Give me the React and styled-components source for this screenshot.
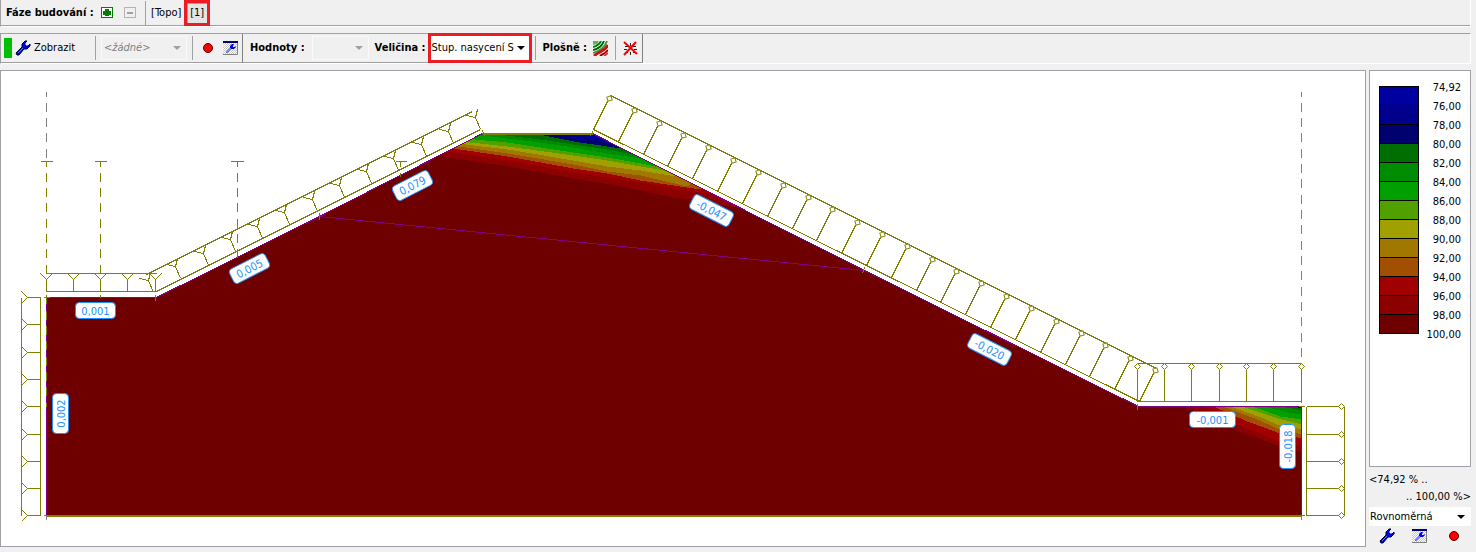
import styled, { createGlobalStyle } from 'styled-components';

const OLIVE = '#808000';
const PURPLE = '#800080';
const BLUE = '#1e90ff';

const scale = [
  { from: '74,92', color: '#0000a0' },
  { from: '76,00', color: '#00008c' },
  { from: '78,00', color: '#00006e' },
  { from: '80,00', color: '#006e00' },
  { from: '82,00', color: '#008c00' },
  { from: '84,00', color: '#00a000' },
  { from: '86,00', color: '#50a000' },
  { from: '88,00', color: '#a0a000' },
  { from: '90,00', color: '#a07800' },
  { from: '92,00', color: '#a05000' },
  { from: '94,00', color: '#a00000' },
  { from: '96,00', color: '#8c0000' },
  { from: '98,00', color: '#6e0000' },
];

// every band covers the area above its lower edge, the next one is drawn over it
const crestBands = [
  { color: '#8c0000', edge: '443,156 507,166 573,178 627,187 673,197 690,199 740,208' },
  { color: '#a00000', edge: '448,151 507,160 573,172 640,182 673,188 712,194' },
  { color: '#a05000', edge: '452,148 473,151 507,156 573,168 607,173 640,180 700,189' },
  { color: '#a07800', edge: '458,146 507,153 573,164 607,171 640,175 687,186' },
  { color: '#a0a000', edge: '465,144 507,149 573,160 607,166 640,170 675,176' },
  { color: '#50a000', edge: '470,142 507,146 573,155 607,160 640,166 664,170' },
  { color: '#00a000', edge: '475,139 507,142 573,152 607,157 640,163 655,166' },
  { color: '#008c00', edge: '482,135 507,138 540,142 573,147 607,153 640,158' },
  { color: '#006e00', edge: '497,134 540,139 573,144 607,149 632,154' },
  { color: '#00006e', edge: '533,133 573,141 607,146 620,148' },
  { color: '#00008c', edge: '543,133 573,138 597,141 608,143' },
];

const toeBands = [
  { color: '#8c0000', edge: '1183,406 1237,430 1280,446 1302,452' },
  { color: '#a00000', edge: '1203,406 1235,423 1277,440 1302,446' },
  { color: '#a05000', edge: '1213,406 1247,421 1277,432 1302,438' },
  { color: '#a07800', edge: '1222,406 1257,419 1277,428 1302,434' },
  { color: '#a0a000', edge: '1230,406 1263,418 1277,424 1302,429' },
  { color: '#50a000', edge: '1241,406 1277,418 1302,424' },
  { color: '#00a000', edge: '1252,406 1280,416 1302,419' },
  { color: '#008c00', edge: '1263,406 1287,412 1302,414' },
  { color: '#006e00', edge: '1280,406 1302,410' },
  { color: '#00006e', edge: '1292,406 1302,408' },
];

const tags = [
  { text: '0,001', x: 95, y: 310, w: 40 },
  { text: '0,005', x: 249, y: 268, w: 40, angle: -27 },
  { text: '0,079', x: 412, y: 185, w: 40, angle: -27 },
  { text: '-0,047', x: 711, y: 210, w: 44, angle: 27 },
  { text: '-0,020', x: 989, y: 349, w: 44, angle: 27 },
  { text: '-0,001', x: 1212, y: 419, w: 46 },
  { text: '0,002', x: 60, y: 413, w: 40, angle: -90 },
  { text: '-0,018', x: 1287, y: 446, w: 44, angle: -90 },
];

const GROUND = '46,297 156,297 319,216 482,133 592,133 864,270 1138,406 1301,406 1301,515 46,515';

const steps = (count, from, to) =>
  Array.from({ length: count + 1 }, (_, i) => Math.round(from + ((to - from) * i) / count));

const zip = (xs, ys) => xs.map((x, i) => [x, ys[i]]);

const Wrench = () => (
  <svg width='16' height='16' viewBox='0 0 16 16' aria-hidden='true'>
    <path
      d='M1 13l6-6V4l3-3h2L10 3v2l1 1h2l2-2v2l-3 3H9l-5 6H2z'
      fill='#0000ff'
      stroke='#000040'
      strokeWidth='1'
      strokeLinejoin='round'
    />
    <path d='M3 13l5-5' stroke='#4a7dff' strokeWidth='1' />
  </svg>
);

const WindowWrench = () => (
  <svg width='16' height='14' viewBox='0 0 16 14' aria-hidden='true'>
    <defs>
      <pattern id='dots' width='2' height='2' patternUnits='userSpaceOnUse'>
        <rect width='2' height='2' fill='#fff' />
        <rect width='1' height='1' fill='#c8c8c8' />
        <rect x='1' y='1' width='1' height='1' fill='#c8c8c8' />
      </pattern>
    </defs>
    <rect width='15' height='14' fill='url(#dots)' />
    <path d='M0 13.500h14.500V2' fill='none' stroke='#808080' />
    <rect width='15' height='2' fill='#000080' />
    <path d='M3 11l4-4V5l2-2h2L10 5v1h2l1-1v1l-2 2H8l-4 4z' fill='#0000ff' />
    <path d='M4 11l4-4' stroke='#5a8cff' />
  </svg>
);

const RedDot = () => (
  <svg width='12' height='12' viewBox='0 0 12 12' aria-hidden='true'>
    <circle cx='6' cy='6' r='4.500' fill='#ff0000' stroke='#600000' />
  </svg>
);

const PlusIcon = () => (
  <svg width='13' height='12' viewBox='0 0 13 12' shapeRendering='crispEdges' aria-hidden='true'>
    <rect width='12' height='11' rx='1' fill='#008000' />
    <rect x='1' y='1' width='10' height='9' fill='#fff' />
    <path d='M4 2h4v2h2v4H8v1H4V8H2V4h2z' fill='#008000' />
  </svg>
);

const MinusIcon = () => (
  <svg width='13' height='12' viewBox='0 0 13 12' shapeRendering='crispEdges' aria-hidden='true'>
    <rect width='12' height='11' rx='1' fill='#b4b4b4' />
    <rect x='1' y='1' width='10' height='9' fill='#f0f0f0' />
    <rect x='3' y='5' width='6' height='2' fill='#a0a0a0' />
  </svg>
);

const SurfaceIcon = () => (
  <svg width='15' height='15' viewBox='0 0 15 15' aria-hidden='true'>
    <rect width='15' height='15' fill='#fff' />
    <path d='M0 0h6L4 3 0 4z' fill='#60b060' />
    <g fill='none' strokeWidth='2'>
      <path d='M0 6C4 5 6 4 8 0' stroke='#008000' />
      <path d='M0 9C6 8 9 5 11 0' stroke='#006000' />
      <path d='M0 12C7 10 12 6 14 0' stroke='#30a040' />
      <path d='M1 15C5 11 11 11 15 4' stroke='#d01010' strokeWidth='3' />
      <path d='M7 15C10 13 13 12 15 9' stroke='#a00000' />
      <path d='M11 15L15 12' stroke='#e03030' />
    </g>
  </svg>
);

const NoMeshIcon = () => (
  <svg width='15' height='15' viewBox='0 0 15 15' aria-hidden='true'>
    <g shapeRendering='crispEdges' stroke='#202020' fill='none'>
      <path d='M2 5h3M10 5h3M1 8h3M11 8h3M2 11h3M10 11h3' />
      <path d='M5 4v2M10 4v2M7 2v3M7 11v3M4 10v2M11 10v2' />
    </g>
    <path d='M1 1l13 12M13 1L1 14' stroke='#ff0000' strokeWidth='2' />
  </svg>
);

const Diamond = ({ x, y, angle = 0 }) => (
  <path
    d='M-3 0L0-3L3 0L0 3Z'
    fill='#fff'
    transform={`translate(${x} ${y}) rotate(${angle})`}
    shapeRendering='geometricPrecision'
  />
);

const Loads = () => {
  const leftYs = [297, 324, 352, 379, 406, 434, 461, 488, 515];
  const topXs = [46, 73, 100, 127, 155];
  const toeXs = [1137, 1164, 1191, 1219, 1246, 1273, 1301];
  const rightYs = [406, 434, 461, 488, 515];
  const upSlope = zip(steps(12, 153, 480), steps(12, 292, 129));
  const downSlope = zip(steps(22, 593, 1139), steps(22, 129, 401));

  return (
    <g stroke={OLIVE} fill='none'>
      <path d='M21 297V515M40 297V515M43 297H49M43 515H49' />
      {leftYs.map((y) => (
        <path key={y} d={`M40 ${y}H27L21 ${y - 6}M27 ${y}L21 ${y + 6}`} />
      ))}

      <path d='M46 273H156M46 291H156' />
      {topXs.map((x) => (
        <path key={x} d={`M${x} 291V279L${x - 6} 273M${x} 279L${x + 6} 273`} />
      ))}

      <path d='M156 291L480 129M146 274L472 111M155 294V300M482 130L484 136' />
      {upSlope.map(([x, y]) => (
        <path key={x} d={`M${x} ${y}L${x - 5} ${y - 12}L${x - 14} ${y - 14}M${x - 5} ${y - 12}L${x - 3} ${y - 20}`} />
      ))}

      <path d='M593 129L1139 401M610 95L1156 368M592 131L590 136M1137 403V409M864 267L862 273' />
      {downSlope.map(([x, y]) => (
        <g key={x}>
          <path d={`M${x} ${y}L${x + 14} ${y - 28}`} />
          <Diamond x={x + 16} y={y - 31} angle={27} />
        </g>
      ))}

      <path d='M1137 363H1301M1137 401H1301' />
      {toeXs.map((x) => (
        <g key={x}>
          <path d={`M${x} 401V369`} />
          <Diamond x={x} y={366} />
        </g>
      ))}

      <path d='M1306 406V515M1344 406V515M1298 406H1304M1298 515H1304' />
      {rightYs.map((y) => (
        <g key={y}>
          <path d={`M1306 ${y}H1338`} />
          <Diamond x={1341} y={y} />
        </g>
      ))}
    </g>
  );
};

const Section = () => (
  <Drawing viewBox='0.5 70.5 1364 475' role='img' aria-label='Stup. nasycení S'>
    <defs>
      <clipPath id='ground'>
        <polygon points={GROUND} />
      </clipPath>
    </defs>
    <g shapeRendering='crispEdges' strokeWidth='1'>
      <path d='M46 91V161M1301 91V406' stroke='#808080' strokeDasharray='9 6.330' strokeDashoffset='4' />
      <path d='M46 515V519M1301 515V519' stroke='#808080' />
      <polygon points={GROUND} fill='#6e0000' />
      <g clipPath='url(#ground)'>
        {crestBands.map(({ color, edge }) => (
          <polygon key={color} fill={color} points={`420,120 ${edge} 760,120`} />
        ))}
        <polygon fill='#0000a0' points='560,133 592,137 600,137 600,133' />
        {toeBands.map(({ color, edge }) => (
          <polygon key={color} fill={color} points={`${edge} 1302,400`} />
        ))}
      </g>
      <g stroke={PURPLE} fill='none'>
        <path d='M46 515V297H156L319 216L482 133M592 133L864 270L1138 406H1301V515' />
        <path d='M319 216L864 270' />
      </g>
      <g stroke={OLIVE} fill='none'>
        <path d='M482 133H592M46 515H1301' strokeWidth='2' />
        <path d='M40 161H52M94 161H106M230 161H243M395 161H406' />
        <path
          d='M46 161V406M100 161V297M237 161V257M400 161V176'
          strokeDasharray='9 6.330'
          strokeDashoffset='4'
        />
        <path d='M319 212V219' />
      </g>
      <Loads />
    </g>
    {tags.map(({ text, x, y, w, angle = 0 }) => (
      <g key={text} transform={`translate(${x} ${y}) rotate(${angle})`}>
        <rect x={-w / 2} y='-8' width={w} height='16' rx='4' fill='#fff' stroke={BLUE} />
        <Tag y='4'>{text}</Tag>
      </g>
    ))}
  </Drawing>
);

const App = () => {
  return (
    <Page>
      <GlobalStyle />
      <Bar>
        <StageBar>
          <BarTitle>Fáze budování :</BarTitle>
          <IconButton aria-label='Přidat fázi'>
            <PlusIcon />
          </IconButton>
          <IconButton aria-label='Odebrat fázi' disabled>
            <MinusIcon />
          </IconButton>
          <Divider />
          <StageButton>[Topo]</StageButton>
          <StageButton $active>[1]</StageButton>
        </StageBar>
      </Bar>

      <Bar $sunken>
        <Group>
          <ShowButton>
            <i />
            <Wrench />
            Zobrazit
          </ShowButton>
          <Divider />
          <Combo $width='86px' $muted>
            <select aria-label='Nastavení zobrazení' disabled>
              <option>&lt;žádné&gt;</option>
            </select>
          </Combo>
          <Divider />
          <IconButton aria-label='Zaznamenat'>
            <RedDot />
          </IconButton>
          <IconButton aria-label='Nastavení okna'>
            <WindowWrench />
          </IconButton>
        </Group>
        <Group>
          <BarTitle as='label' htmlFor='values' $wide>
            Hodnoty :
          </BarTitle>
          <Combo $width='57px' $muted>
            <select id='values' disabled />
          </Combo>
          <BarTitle as='label' htmlFor='quantity'>
            Veličina :
          </BarTitle>
          <Combo $width='104px' $marked>
            <select id='quantity'>
              <option>Stup. nasycení S</option>
            </select>
          </Combo>
          <Divider />
          <BarTitle>Plošně :</BarTitle>
          <IconButton aria-label='Izoplochy'>
            <SurfaceIcon />
          </IconButton>
          <Divider />
          <IconButton aria-label='Bez sítě'>
            <NoMeshIcon />
          </IconButton>
        </Group>
      </Bar>

      <Content>
        <Canvas>
          <Section />
        </Canvas>
        <Side>
          <Legend>
            <Swatches>
              {scale.map(({ color }) => (
                <Swatch key={color} $color={color} />
              ))}
            </Swatches>
            <Values>
              {scale.map(({ from }) => (
                <li key={from}>{from}</li>
              ))}
              <li>100,00</li>
            </Values>
          </Legend>
          <Range>
            <span>&lt;74,92 % ..</span>
            <span>.. 100,00 %&gt;</span>
          </Range>
          <Combo $width='100%' $small>
            <select aria-label='Stupnice'>
              <option>Rovnoměrná</option>
            </select>
          </Combo>
          <SideTools>
            <IconButton aria-label='Nastavení stupnice'>
              <Wrench />
            </IconButton>
            <IconButton aria-label='Nastavení okna stupnice'>
              <WindowWrench />
            </IconButton>
            <IconButton aria-label='Zaznamenat stupnici'>
              <RedDot />
            </IconButton>
          </SideTools>
        </Side>
      </Content>
    </Page>
  );
};

const GlobalStyle = createGlobalStyle`
  * {
    box-sizing: border-box;
  }

  body {
    margin: 0;
    background: #f0f0f0;
    color: #000;
    font-family: Tahoma, 'DejaVu Sans Condensed', 'Noto Sans', sans-serif;
    font-size: 11px;
    line-height: 16px;
  }

  button,
  select {
    margin: 0;
    padding: 0;
    border: none;
    background: none;
    color: inherit;
    font: inherit;
  }

  svg {
    display: block;
    flex-shrink: 0;
  }
`;

const Page = styled.div`
  display: flex;
  flex-direction: column;
  gap: 6px;
  padding-right: 5px;
`;

const Bar = styled.div`
  display: flex;
  border-left: 1px solid #a0a0a0;
  border-right: 1px solid #fff;
  border-bottom: 1px solid #fff;
  border-top: ${({ $sunken }) => ($sunken ? '1px solid #a0a0a0' : 'none')};
`;

const StageBar = styled.div`
  display: flex;
  flex: 1;
  align-items: center;
  height: 26px;
  padding-left: 1px;
  border-bottom: 1px solid #a0a0a0;
`;

const Group = styled.div`
  display: flex;
  align-items: center;
  height: 29px;
  padding-left: 3px;
  border-right: 1px solid #808080;
  border-bottom: 1px solid #a0a0a0;
`;

const BarTitle = styled.span`
  margin-left: 4px;
  margin-right: ${({ $wide }) => ($wide ? '5px' : '2px')};
  font-weight: bold;
  white-space: nowrap;
`;

const Divider = styled.span`
  width: 1px;
  height: 24px;
  margin: 0 3px;
  background: #a0a0a0;
`;

const IconButton = styled.button`
  display: flex;
  align-items: center;
  justify-content: center;
  width: 23px;
  height: 20px;
`;

const StageButton = styled.button`
  width: ${({ $active }) => ($active ? '20px' : '34px')};
  height: 20px;
  margin-left: ${({ $active }) => ($active ? '4px' : '0')};
  background: ${({ $active }) => ($active ? '#e4e4e4' : 'transparent')};
  border-top: 1px solid ${({ $active }) => ($active ? '#a0a0a0' : 'transparent')};
  border-left: 1px solid ${({ $active }) => ($active ? '#a0a0a0' : 'transparent')};
  outline: ${({ $active }) => ($active ? '3px solid #ed1c24' : 'none')};
`;

const ShowButton = styled.button`
  display: flex;
  align-items: center;
  gap: 3px;
  width: 88px;

  i {
    width: 8px;
    height: 20px;
    background: #00c000;
  }
`;

const Combo = styled.span`
  position: relative;
  width: ${({ $width }) => $width};
  height: ${({ $small }) => ($small ? '19px' : '24px')};
  margin: ${({ $muted }) => ($muted ? '0 2px' : '0')};
  border: ${({ $marked }) => ($marked ? '3px solid #ed1c24' : 'none')};
  box-shadow: ${({ $muted }) => ($muted ? 'inset 0 0 0 1px #fafafa' : 'none')};
  background: ${({ $muted }) => ($muted ? '#f0f0f0' : '#fff')};

  ${({ $marked }) => $marked && 'height: 30px;'}

  select {
    appearance: none;
    width: 100%;
    height: 100%;
    padding-left: ${({ $muted }) => ($muted ? '3px' : '1px')};
    color: ${({ $muted }) => ($muted ? '#808080' : '#000')};
    font-style: ${({ $muted }) => ($muted ? 'italic' : 'normal')};
    opacity: 1;
  }

  &::after {
    content: '';
    position: absolute;
    top: 50%;
    right: ${({ $marked }) => ($marked ? '4px' : '6px')};
    border: 4px solid transparent;
    border-top-color: ${({ $muted }) => ($muted ? '#a0a0a0' : '#000')};
    margin-top: -2px;
    pointer-events: none;
  }
`;

const Content = styled.main`
  display: flex;
  align-items: flex-start;
  gap: 3px;
`;

const Canvas = styled.section`
  flex: 1;
  min-width: 0;
  background: #fff;
  border: 1px solid #a0a0a8;
`;

const Drawing = styled.svg`
  width: 100%;
  height: auto;
`;

const Tag = styled.text`
  fill: ${BLUE};
  font-size: 11px;
  text-anchor: middle;
`;

const Side = styled.aside`
  display: flex;
  flex-direction: column;
  width: 102px;
`;

const Legend = styled.div`
  display: flex;
  justify-content: space-between;
  padding: 15px 9px 130px;
  border: 1px solid #a0a0a8;
  background: #fff;
`;

const Swatches = styled.div`
  width: 40px;
  border-top: 1px solid #000;
`;

const Swatch = styled.div`
  height: 19px;
  border: 1px solid #000;
  border-top: none;
  background: ${({ $color }) => $color};
`;

const Values = styled.ul`
  margin: -8px 0;
  padding: 0;
  list-style: none;
  text-align: right;

  li {
    height: 19px;
    line-height: 19px;
  }
`;

const Range = styled.div`
  display: flex;
  flex-direction: column;
  padding: 4px 0 2px;
  line-height: 17px;

  span + span {
    text-align: right;
  }
`;

const SideTools = styled.div`
  display: flex;
  justify-content: space-between;
  padding: 0 6px;
`;

export default App;
